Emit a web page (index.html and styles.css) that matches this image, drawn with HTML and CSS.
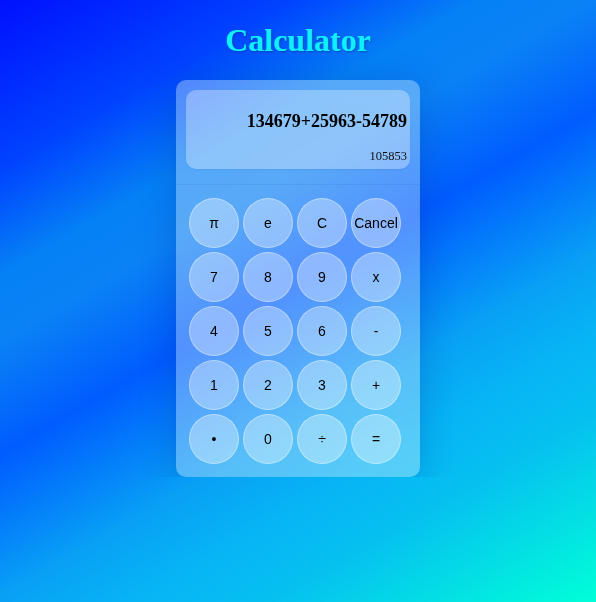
FILE: index.html
```html
<!DOCTYPE html>
<html lang="en">
<head>
<meta charset="utf-8">
<title>Calculator</title>
<link rel="stylesheet" href="styles.css">
</head>
<body>
<h1 class="title">Calculator</h1>
<div class="calc">
  <div class="screen-wrap">
    <div class="screen">
      <div class="expr">134679+25963-54789</div>
      <div class="result">105853</div>
    </div>
  </div>
  <div class="keys">
    <button class="key">π</button>
    <button class="key">e</button>
    <button class="key">C</button>
    <button class="key">Cancel</button>
    <button class="key">7</button>
    <button class="key">8</button>
    <button class="key">9</button>
    <button class="key">x</button>
    <button class="key">4</button>
    <button class="key">5</button>
    <button class="key">6</button>
    <button class="key">-</button>
    <button class="key">1</button>
    <button class="key">2</button>
    <button class="key">3</button>
    <button class="key">+</button>
    <button class="key">•</button>
    <button class="key">0</button>
    <button class="key">÷</button>
    <button class="key">=</button>
  </div>
</div>
</body>
</html>
```
FILE: styles.css
```css
html {
  height: 100%;
  background: linear-gradient(150deg, #0010ff 0%, #0044ff 18%, #0580f5 29%, #0a82f5 36%, #005cff 48%, #08a0f5 63%, #07b5f5 72%, #06c0f0 80%, #00ffd8 100%);
}
body {
  margin: 0;
  font-family: "Liberation Serif", "Times New Roman", serif;
}
.title {
  margin: 21px 0 21px;
  padding-top: 1px;
  text-align: center;
  font-size: 32px;
  font-weight: bold;
  color: #10eeff;
  text-shadow: 1px 1px 2px rgba(0, 40, 120, 0.45);
  line-height: 37px;
}
.calc {
  width: 244px;
  margin: 0 auto;
  border-radius: 10px;
  background: rgba(255, 255, 255, 0.32);
  backdrop-filter: blur(12px);
  box-shadow: 0 6px 36px rgba(0, 20, 120, 0.22);
  overflow: hidden;
}
.screen-wrap {
  padding: 10px 10px 15px;
  border-bottom: 1px solid rgba(30, 80, 180, 0.12);
}
.screen {
  height: 79px;
  box-sizing: border-box;
  padding: 20px 3px 0;
  border-radius: 10px;
  background: rgba(255, 255, 255, 0.32);
  box-shadow: 0 1px 2px rgba(0, 40, 140, 0.08);
  text-align: right;
  color: #000;
}
.expr {
  font-size: 18px;
  font-weight: bold;
  line-height: 22px;
}
.result {
  margin-top: 17px;
  font-size: 12.5px;
  line-height: 15px;
  color: #111;
}
.keys {
  display: grid;
  grid-template-columns: repeat(4, 50px);
  grid-auto-rows: 50px;
  gap: 4px;
  padding: 13px;
}
.key {
  width: 50px;
  height: 50px;
  padding: 0;
  border-radius: 50%;
  border: 1px solid rgba(255, 255, 255, 0.38);
  background: rgba(255, 255, 255, 0.35);
  font-family: "Liberation Sans", Arial, sans-serif;
  font-size: 14px;
  color: #000;
  display: flex;
  align-items: center;
  justify-content: center;
  white-space: nowrap;
  overflow: visible;
}
```
